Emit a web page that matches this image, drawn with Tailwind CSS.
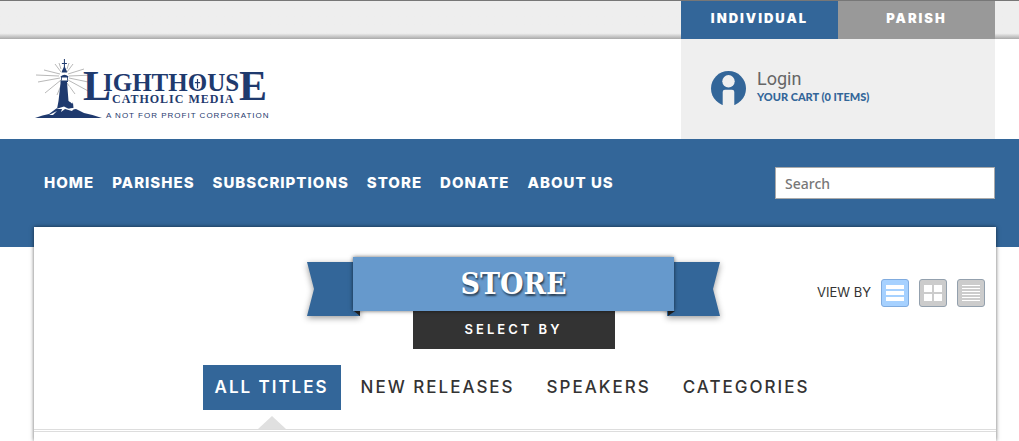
<!DOCTYPE html>
<html lang="en">
<head>
  <meta charset="UTF-8" />
  <meta name="viewport" content="width=device-width, initial-scale=1.0"/>
  <title>Store - Lighthouse Catholic Media</title>
  <script src="https://cdn.jsdelivr.net/npm/@tailwindcss/browser@4"></script>
</head>
<body class="bg-white min-h-screen flex flex-col font-['Inter',sans-serif] text-[#333333]">

  <!-- Top bar -->
  <div class="h-[39px] shrink-0 border-t border-[#777777] bg-linear-to-b from-[#eeeeee] from-85% to-[#aaaaaa] pl-[34px] pr-6">
    <div class="flex justify-end h-full text-[13px] font-black text-white">
      <button class="w-[157px] bg-[#336699] tracking-[2px] pb-[2px]">INDIVIDUAL</button>
      <button class="w-[157px] bg-[#999999] tracking-[2px] pb-[2px]">PARISH</button>
    </div>
  </div>

  <!-- Header -->
  <header class="h-[100px] shrink-0 flex justify-between pl-[34px] pr-6">
    <a href="#" aria-label="Lighthouse Catholic Media" class="pt-4">
      <svg width="236" height="68" viewBox="34 55 236 68" fill="#1f3a6e">
        <!-- light rays -->
        <g stroke="#9a9a9a" stroke-width="0.7">
          <path d="M60 74L44 70M59 76L36 75M60 78L38 82M61 80L45 93M68 74L84 69M69 76L93 75M69 78L93 83M68 80L90 92M62 83L57 95M67 83L75 94M61 72L55 64M67 72L73 64M61 69L59 63M67 69L69 63"/>
        </g>
        <!-- cross and lantern -->
        <path d="M63.9 59h1v4h2v1h-2v5h-1v-5h-2v-1h2z"/>
        <path d="M64.4 66l2.2 4.5.6 2h-5.6l.6-2z"/>
        <circle cx="64.400" cy="77.500" r="3.500" fill="#ffffff"/>
        <path d="M60.500 76.500q4-3.500 8 0l-.5 1h-7z"/>
        <path d="M61 77h.8v3.500h-.8zM67.200 77h.8v3.500h-.8z"/>
        <path d="M60.500 80.500h7.500v1.500h-1l1.500 19 4.500 2 .5 5-7 1-9.500 0 1.500-8 2-17.500z"/>
        <path d="M69.500 84l3 20-3.500-3z" fill="#ffffff"/>
        <!-- rock -->
        <path d="M35 118q8-3 14-4l8-6 8 -1 5 3 6-1 8 4q10 2 18 5z"/>
        <path d="M56 109l8-2.500 5 2.500 6-1.500-3 3.500-7-2-4 3 1-3zM49 115l8-4-4 4z" fill="#ffffff"/>
        <g font-family="Liberation Serif, serif" font-weight="bold">
          <text x="83" y="100" font-size="42">L</text>
          <text x="103" y="91" font-size="25">IGHTHOUS</text>
          <text x="239" y="100" font-size="42">E</text>
        </g>
        <path d="M196.900 79h1.200v3h2v1.200h-2v5h-1.200v-5h-2v-1.200h2z"/>
        <text x="112" y="103" font-family="Liberation Serif, serif" font-weight="bold" font-size="12" class="tracking-[1px]">CATHOLIC MEDIA</text>
        <text x="106" y="118" font-family="Liberation Sans, sans-serif" font-size="8" class="tracking-[1px]">A NOT FOR PROFIT CORPORATION</text>
      </svg>
    </a>
    <div class="w-[314px] bg-[#efefef] flex items-start gap-[11px] pl-[30px] pt-[30px]">
      <svg width="35" height="35" viewBox="0 0 35 35" class="mt-[2px]">
        <circle cx="17.500" cy="17.500" r="17.500" fill="#336699"/>
        <circle cx="17.500" cy="10.300" r="6.200" fill="#efefef"/>
        <path d="M11.700 35V21q0-2.300 2.300-2.300h7q2.300 0 2.300 2.300v14z" fill="#efefef"/>
      </svg>
      <div>
        <a href="#" class="block font-['Roboto',sans-serif] text-[18px] leading-5 text-[#666666]">Login</a>
        <a href="#" class="block font-['Lato',sans-serif] text-[11px] leading-4 font-black text-[#336699]">YOUR CART (0 ITEMS)</a>
      </div>
    </div>
  </header>

  <!-- Navigation -->
  <div class="h-[108px] shrink-0 bg-[#336699] pl-11 pr-6 pt-7">
    <div class="flex justify-between">
      <nav class="flex items-center h-[33px] gap-[18px] text-[15px] font-extrabold text-white tracking-[1px]">
        <a href="#">HOME</a>
        <a href="#">PARISHES</a>
        <a href="#">SUBSCRIPTIONS</a>
        <a href="#">STORE</a>
        <a href="#">DONATE</a>
        <a href="#">ABOUT US</a>
      </nav>
      <input type="search" aria-label="Search" placeholder="Search" class="w-[220px] h-8 border border-[#aaaaaa] bg-white px-[9px] font-['Noto_Sans',sans-serif] font-medium text-[14px] placeholder:text-[#777777]" />
    </div>
  </div>

  <!-- Store card -->
  <main class="relative flex-1 -mt-5 ml-[34px] mr-[23px] bg-white shadow-[0_0_4px_rgba(0,0,0,0.6)]">
    <div class="grid grid-cols-[1fr_auto_1fr] pt-[30px] pl-2 pr-[11px]">
      <div></div>

      <!-- Ribbon -->
      <div class="relative w-[413px] flex flex-col items-center">
        <svg width="413" height="60" viewBox="0 0 413 60" class="absolute left-0 top-0 overflow-visible">
          <g class="drop-shadow-[0_2px_3px_rgba(0,0,0,0.4)]" fill="#336699">
            <path d="M0 5h53v54H0l7-27z"/>
            <path d="M413 5h-53v54h53l-7-27z"/>
          </g>
          <path d="M47 54h6v5zM368 54h-7v5z" fill="#222222"/>
        </svg>
        <h1 class="relative z-10 w-[321px] h-[54px] bg-[#6699cc] shadow-[0_0_4px_rgba(0,0,0,0.6)] text-center font-['DejaVu_Serif_Condensed','DejaVu_Serif',serif] font-bold text-[30px] leading-[54px] text-white text-shadow-[1px_2px_2px_rgba(0,0,0,0.6)]">STORE</h1>
        <button class="w-[202px] h-[38px] bg-[#333333] text-[13px] font-semibold tracking-[3px] text-white">SELECT BY</button>
      </div>

      <!-- View switch -->
      <div class="flex items-center justify-end gap-[10px] h-7 mt-[22px]">
        <span class="text-[13px]">VIEW BY</span>
        <button aria-label="List view" class="size-7 rounded-[3px] border border-[#7fabdf] bg-[#a6d1ff] flex items-center justify-center">
          <svg width="18" height="18" fill="#ffffff"><path d="M0 1h18v4H0zM0 7h18v4H0zM0 13h18v4H0z"/></svg>
        </button>
        <button aria-label="Grid view" class="size-7 rounded-[3px] border border-[#93a0ad] bg-[#cccccc] flex items-center justify-center">
          <svg width="18" height="18" fill="#ffffff"><path d="M0 1h8v7H0zM10 1h8v7h-8zM0 10h8v7H0zM10 10h8v7h-8z"/></svg>
        </button>
        <button aria-label="Compact view" class="size-7 rounded-[3px] border border-[#93a0ad] bg-[#cccccc] flex items-center justify-center">
          <svg width="18" height="18" fill="#ffffff"><path d="M0 1h18v1H0zM0 4h18v1H0zM0 7h18v1H0zM0 10h18v1H0zM0 13h18v1H0zM0 16h18v1H0z"/></svg>
        </button>
      </div>
    </div>

    <!-- Tabs -->
    <div class="flex justify-center gap-2 mt-4 pr-[6px] pb-[19px] border-b-3 border-double border-[#dddddd] text-[17px] font-medium leading-[44px] tracking-[2px]">
      <a href="#" class="relative h-[45px] bg-[#336699] px-3 font-semibold text-white">ALL TITLES
        <svg width="28" height="13" class="absolute left-1/2 -bottom-[19px] -translate-x-1/2" fill="#e0e0e0"><path d="M14 0l14 13H0z"/></svg>
      </a>
      <a href="#" class="px-3">NEW RELEASES</a>
      <a href="#" class="px-3">SPEAKERS</a>
      <a href="#" class="px-3">CATEGORIES</a>
    </div>
  </main>

</body>
</html>
